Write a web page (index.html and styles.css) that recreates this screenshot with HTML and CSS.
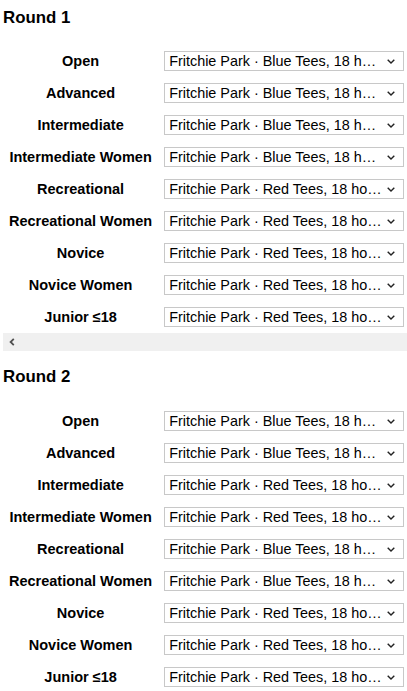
FILE: index.html
```html
<!DOCTYPE html>
<html>
<head>
<meta charset="utf-8">
<link rel="stylesheet" href="styles.css">
</head>
<body>
<section class="round">
  <h3 class="round-title">Round 1</h3>
  <div class="scroller">
    <table class="tees">
      <tr><th>Open</th><td><div class="tee-wrap"><select class="tee"><option>Fritchie Park · Blue Tees, 18 holes, par 72</option></select><svg class="chev" viewBox="0 0 8 5" width="8" height="5"><path d="M0.7 0.7 L4 4 L7.3 0.7" fill="none" stroke="#222" stroke-width="1.4"/></svg></div></td><td class="extra"></td></tr>
      <tr><th>Advanced</th><td><div class="tee-wrap"><select class="tee"><option>Fritchie Park · Blue Tees, 18 holes, par 72</option></select><svg class="chev" viewBox="0 0 8 5" width="8" height="5"><path d="M0.7 0.7 L4 4 L7.3 0.7" fill="none" stroke="#222" stroke-width="1.4"/></svg></div></td><td class="extra"></td></tr>
      <tr><th>Intermediate</th><td><div class="tee-wrap"><select class="tee"><option>Fritchie Park · Blue Tees, 18 holes, par 72</option></select><svg class="chev" viewBox="0 0 8 5" width="8" height="5"><path d="M0.7 0.7 L4 4 L7.3 0.7" fill="none" stroke="#222" stroke-width="1.4"/></svg></div></td><td class="extra"></td></tr>
      <tr><th>Intermediate Women</th><td><div class="tee-wrap"><select class="tee"><option>Fritchie Park · Blue Tees, 18 holes, par 72</option></select><svg class="chev" viewBox="0 0 8 5" width="8" height="5"><path d="M0.7 0.7 L4 4 L7.3 0.7" fill="none" stroke="#222" stroke-width="1.4"/></svg></div></td><td class="extra"></td></tr>
      <tr><th>Recreational</th><td><div class="tee-wrap"><select class="tee"><option>Fritchie Park · Red Tees, 18 holes, par 72</option></select><svg class="chev" viewBox="0 0 8 5" width="8" height="5"><path d="M0.7 0.7 L4 4 L7.3 0.7" fill="none" stroke="#222" stroke-width="1.4"/></svg></div></td><td class="extra"></td></tr>
      <tr><th>Recreational Women</th><td><div class="tee-wrap"><select class="tee"><option>Fritchie Park · Red Tees, 18 holes, par 72</option></select><svg class="chev" viewBox="0 0 8 5" width="8" height="5"><path d="M0.7 0.7 L4 4 L7.3 0.7" fill="none" stroke="#222" stroke-width="1.4"/></svg></div></td><td class="extra"></td></tr>
      <tr><th>Novice</th><td><div class="tee-wrap"><select class="tee"><option>Fritchie Park · Red Tees, 18 holes, par 72</option></select><svg class="chev" viewBox="0 0 8 5" width="8" height="5"><path d="M0.7 0.7 L4 4 L7.3 0.7" fill="none" stroke="#222" stroke-width="1.4"/></svg></div></td><td class="extra"></td></tr>
      <tr><th>Novice Women</th><td><div class="tee-wrap"><select class="tee"><option>Fritchie Park · Red Tees, 18 holes, par 72</option></select><svg class="chev" viewBox="0 0 8 5" width="8" height="5"><path d="M0.7 0.7 L4 4 L7.3 0.7" fill="none" stroke="#222" stroke-width="1.4"/></svg></div></td><td class="extra"></td></tr>
      <tr><th>Junior ≤18</th><td><div class="tee-wrap"><select class="tee"><option>Fritchie Park · Red Tees, 18 holes, par 72</option></select><svg class="chev" viewBox="0 0 8 5" width="8" height="5"><path d="M0.7 0.7 L4 4 L7.3 0.7" fill="none" stroke="#222" stroke-width="1.4"/></svg></div></td><td class="extra"></td></tr>
    </table>
  </div>
  <div class="hscroll"><svg class="hscroll-arrow" viewBox="0 0 6 8" width="6" height="8"><path d="M4.8 0.8 L1.6 4 L4.8 7.2" fill="none" stroke="#505050" stroke-width="1.8"/></svg></div>
</section>
<section class="round">
  <h3 class="round-title">Round 2</h3>
  <div class="scroller">
    <table class="tees">
      <tr><th>Open</th><td><div class="tee-wrap"><select class="tee"><option>Fritchie Park · Blue Tees, 18 holes, par 72</option></select><svg class="chev" viewBox="0 0 8 5" width="8" height="5"><path d="M0.7 0.7 L4 4 L7.3 0.7" fill="none" stroke="#222" stroke-width="1.4"/></svg></div></td><td class="extra"></td></tr>
      <tr><th>Advanced</th><td><div class="tee-wrap"><select class="tee"><option>Fritchie Park · Blue Tees, 18 holes, par 72</option></select><svg class="chev" viewBox="0 0 8 5" width="8" height="5"><path d="M0.7 0.7 L4 4 L7.3 0.7" fill="none" stroke="#222" stroke-width="1.4"/></svg></div></td><td class="extra"></td></tr>
      <tr><th>Intermediate</th><td><div class="tee-wrap"><select class="tee"><option>Fritchie Park · Red Tees, 18 holes, par 72</option></select><svg class="chev" viewBox="0 0 8 5" width="8" height="5"><path d="M0.7 0.7 L4 4 L7.3 0.7" fill="none" stroke="#222" stroke-width="1.4"/></svg></div></td><td class="extra"></td></tr>
      <tr><th>Intermediate Women</th><td><div class="tee-wrap"><select class="tee"><option>Fritchie Park · Red Tees, 18 holes, par 72</option></select><svg class="chev" viewBox="0 0 8 5" width="8" height="5"><path d="M0.7 0.7 L4 4 L7.3 0.7" fill="none" stroke="#222" stroke-width="1.4"/></svg></div></td><td class="extra"></td></tr>
      <tr><th>Recreational</th><td><div class="tee-wrap"><select class="tee"><option>Fritchie Park · Blue Tees, 18 holes, par 72</option></select><svg class="chev" viewBox="0 0 8 5" width="8" height="5"><path d="M0.7 0.7 L4 4 L7.3 0.7" fill="none" stroke="#222" stroke-width="1.4"/></svg></div></td><td class="extra"></td></tr>
      <tr><th>Recreational Women</th><td><div class="tee-wrap"><select class="tee"><option>Fritchie Park · Blue Tees, 18 holes, par 72</option></select><svg class="chev" viewBox="0 0 8 5" width="8" height="5"><path d="M0.7 0.7 L4 4 L7.3 0.7" fill="none" stroke="#222" stroke-width="1.4"/></svg></div></td><td class="extra"></td></tr>
      <tr><th>Novice</th><td><div class="tee-wrap"><select class="tee"><option>Fritchie Park · Red Tees, 18 holes, par 72</option></select><svg class="chev" viewBox="0 0 8 5" width="8" height="5"><path d="M0.7 0.7 L4 4 L7.3 0.7" fill="none" stroke="#222" stroke-width="1.4"/></svg></div></td><td class="extra"></td></tr>
      <tr><th>Novice Women</th><td><div class="tee-wrap"><select class="tee"><option>Fritchie Park · Red Tees, 18 holes, par 72</option></select><svg class="chev" viewBox="0 0 8 5" width="8" height="5"><path d="M0.7 0.7 L4 4 L7.3 0.7" fill="none" stroke="#222" stroke-width="1.4"/></svg></div></td><td class="extra"></td></tr>
      <tr><th>Junior ≤18</th><td><div class="tee-wrap"><select class="tee"><option>Fritchie Park · Red Tees, 18 holes, par 72</option></select><svg class="chev" viewBox="0 0 8 5" width="8" height="5"><path d="M0.7 0.7 L4 4 L7.3 0.7" fill="none" stroke="#222" stroke-width="1.4"/></svg></div></td><td class="extra"></td></tr>
    </table>
  </div>
  <div class="hscroll"><svg class="hscroll-arrow" viewBox="0 0 6 8" width="6" height="8"><path d="M4.8 0.8 L1.6 4 L4.8 7.2" fill="none" stroke="#505050" stroke-width="1.8"/></svg></div>
</section>
</body>
</html>
```
FILE: styles.css
```css
html, body {
  margin: 0;
  padding: 0;
  background: #fff;
}
body {
  padding-left: 3px;
  font-family: "Liberation Sans", Arial, sans-serif;
  font-size: 14.4px;
  color: #000;
  overflow: hidden;
}
.round-title {
  font-size: 16.85px;
  font-weight: bold;
  margin: 8px 0 18px 0;
  line-height: 19.4px;
}
.round + .round .round-title {
  margin-top: 16px;
}
.scroller {
  overflow: hidden;
}
.tees {
  border-collapse: collapse;
}
.tees th {
  font-weight: bold;
  font-size: 14.5px;
  text-align: center;
  padding: 6px 6px;
  white-space: nowrap;
}
.tees td {
  padding: 6px 6px;
}
.tees td.extra {
  width: 40px;
  padding: 0;
}
.tee-wrap {
  position: relative;
  width: 240px;
  height: 20px;
}
.tee {
  -webkit-appearance: none;
  appearance: none;
  display: block;
  width: 240px;
  height: 20px;
  font-family: "Liberation Sans", Arial, sans-serif;
  font-size: 14.4px;
  color: #000;
  background: #fff;
  border: 1px solid #c8c8c8;
  border-radius: 0;
  padding: 0 21px 0 4px;
  box-sizing: border-box;
  text-overflow: ellipsis;
  white-space: nowrap;
  overflow: hidden;
}
.chev {
  position: absolute;
  right: 9px;
  top: 8px;
  pointer-events: none;
}
.hscroll {
  height: 18px;
  background: #f0f0f0;
  display: flex;
  align-items: center;
}
.hscroll-arrow {
  display: block;
  margin-left: 6px;
}
```
